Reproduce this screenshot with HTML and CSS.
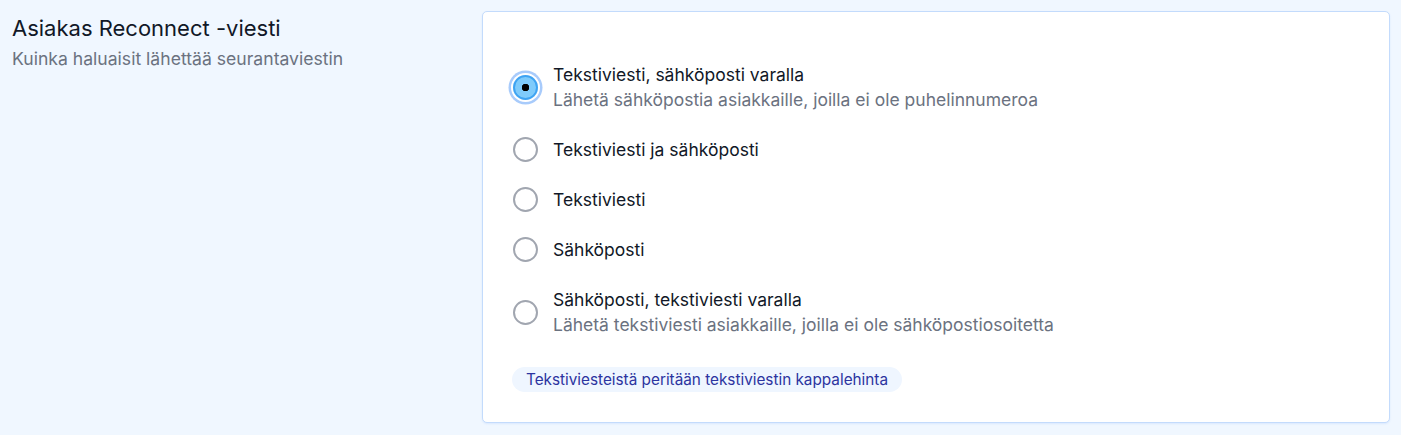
FILE: index.html
```html
<!DOCTYPE html>
<html lang="fi">
<head>
    <meta charset="UTF-8">
    <meta name="viewport" content="width=device-width, initial-scale=1.0">
    <title>Asiakas Reconnect -viesti</title>
    <link rel="stylesheet" href="styles.css">
</head>
<body>
    <div class="settings-row">
        <div class="settings-info">
            <h2>Asiakas Reconnect -viesti</h2>
            <p>Kuinka haluaisit lähettää seurantaviestin</p>
        </div>

        <div class="card">
            <div class="options">
                <label class="option">
                    <input type="radio" name="reconnect" value="sms-email" checked>
                    <span class="option-text">
                        <span class="option-title">Tekstiviesti, sähköposti varalla</span>
                        <span class="option-desc">Lähetä sähköpostia asiakkaille, joilla ei ole puhelinnumeroa</span>
                    </span>
                </label>
                <label class="option">
                    <input type="radio" name="reconnect" value="both">
                    <span class="option-text">
                        <span class="option-title">Tekstiviesti ja sähköposti</span>
                    </span>
                </label>
                <label class="option">
                    <input type="radio" name="reconnect" value="sms">
                    <span class="option-text">
                        <span class="option-title">Tekstiviesti</span>
                    </span>
                </label>
                <label class="option">
                    <input type="radio" name="reconnect" value="email">
                    <span class="option-text">
                        <span class="option-title">Sähköposti</span>
                    </span>
                </label>
                <label class="option">
                    <input type="radio" name="reconnect" value="email-sms">
                    <span class="option-text">
                        <span class="option-title">Sähköposti, tekstiviesti varalla</span>
                        <span class="option-desc">Lähetä tekstiviesti asiakkaille, joilla ei ole sähköpostiosoitetta</span>
                    </span>
                </label>
            </div>

            <div class="note">Tekstiviesteistä peritään tekstiviestin kappalehinta</div>
        </div>
    </div>
</body>
</html>
```

FILE: styles.css
```css
* {
    margin: 0;
    padding: 0;
    box-sizing: border-box;
    font-family: Inter, 'Noto Sans', sans-serif;
}

body {
    background-color: #f0f7ff;
    padding: 11px 11px 12px 12px;
}

.settings-row {
    display: flex;
    gap: 12px;
}

.settings-info {
    width: 458px;
    flex-shrink: 0;
}

.settings-info h2 {
    font-size: 22px;
    font-weight: 400;
    line-height: 30px;
    color: #111827;
    margin-top: 2px;
}

.settings-info p {
    font-size: 17.6px;
    line-height: 25px;
    color: #6b7280;
    margin-top: 3px;
}

.card {
    flex: 1;
    background-color: #fff;
    border: 1px solid #c3dbfc;
    border-radius: 5px;
    box-shadow: 0 1px 2px rgba(59, 130, 246, 0.12);
    padding: 50px 30px 30px 30px;
    height: 412px;
}

.options {
    display: flex;
    flex-direction: column;
    gap: 25px;
}

.option {
    display: flex;
    align-items: center;
    gap: 15px;
    cursor: pointer;
}

.option input {
    appearance: none;
    -webkit-appearance: none;
    width: 25px;
    height: 25px;
    border: 2px solid #a1a6b0;
    border-radius: 50%;
    background-color: #fff;
    flex-shrink: 0;
    margin: 0;
    cursor: pointer;
}

.option input:checked {
    border-color: #3ea3f2;
    background: radial-gradient(circle, #000 0 3.5px, #7fcbfb 4px);
    box-shadow: 0 0 0 2px #fff, 0 0 0 4.5px #a8cbfb;
}

.option-text {
    display: flex;
    flex-direction: column;
    font-size: 17.5px;
    line-height: 25px;
}

.option-title {
    color: #111827;
}

.option-desc {
    color: #6b7280;
}

.note {
    display: inline-block;
    margin-top: 30px;
    margin-left: -1px;
    padding: 0 14px;
    background-color: #eff6ff;
    border-radius: 13px;
    font-size: 15.3px;
    line-height: 25px;
    color: #2c34a0;
}
```
